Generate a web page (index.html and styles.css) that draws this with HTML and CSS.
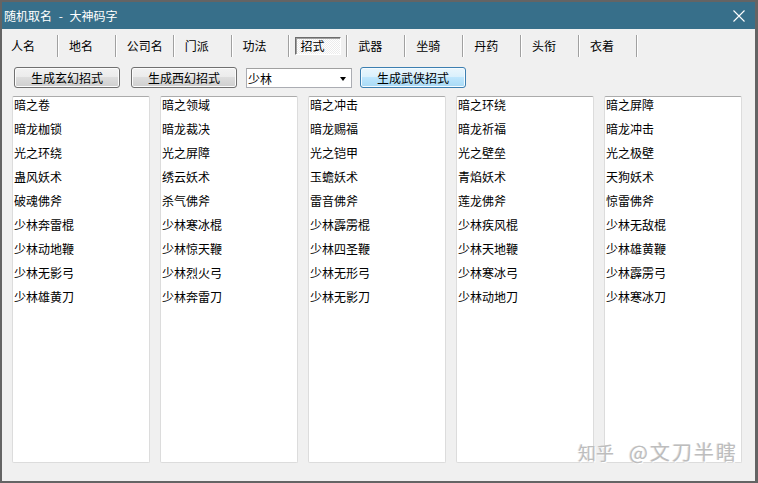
FILE: index.html
```html
<!DOCTYPE html>
<html lang="zh">
<head>
<meta charset="utf-8">
<title>随机取名 - 大神码字</title>
<link rel="stylesheet" href="styles.css">
</head>
<body>
<div class="window">
  <div class="titlebar">
    <span class="title">随机取名 - 大神码字</span>
    <svg class="close" width="12" height="12" viewBox="0 0 12 12"><path d="M0.5 0.5 L11.5 11.5 M11.5 0.5 L0.5 11.5" stroke="#fff" stroke-width="1.1" fill="none"/></svg>
  </div>
  <div class="tabs">
    <div class="tab">人名</div><div class="sep"></div>
    <div class="tab">地名</div><div class="sep"></div>
    <div class="tab">公司名</div><div class="sep"></div>
    <div class="tab">门派</div><div class="sep"></div>
    <div class="tab">功法</div><div class="sep"></div>
    <div class="tab selected">招式</div><div class="sep"></div>
    <div class="tab">武器</div><div class="sep"></div>
    <div class="tab">坐骑</div><div class="sep"></div>
    <div class="tab">丹药</div><div class="sep"></div>
    <div class="tab">头衔</div><div class="sep"></div>
    <div class="tab">衣着</div><div class="sep"></div>
  </div>
  <div class="toolbar">
    <button class="btn">生成玄幻招式</button>
    <button class="btn">生成西幻招式</button>
    <div class="combo"><span>少林</span><span class="arrow"></span></div>
    <button class="btn primary">生成武侠招式</button>
  </div>
  <div class="lists">
    <ul class="list">
      <li>暗之卷</li><li>暗龙枷锁</li><li>光之环绕</li><li>蛊风妖术</li><li>破魂佛斧</li><li>少林奔雷棍</li><li>少林动地鞭</li><li>少林无影弓</li><li>少林雄黄刀</li>
    </ul>
    <ul class="list">
      <li>暗之领域</li><li>暗龙裁决</li><li>光之屏障</li><li>绣云妖术</li><li>杀气佛斧</li><li>少林寒冰棍</li><li>少林惊天鞭</li><li>少林烈火弓</li><li>少林奔雷刀</li>
    </ul>
    <ul class="list">
      <li>暗之冲击</li><li>暗龙赐福</li><li>光之铠甲</li><li>玉蟾妖术</li><li>雷音佛斧</li><li>少林霹雳棍</li><li>少林四圣鞭</li><li>少林无形弓</li><li>少林无影刀</li>
    </ul>
    <ul class="list">
      <li>暗之环绕</li><li>暗龙祈福</li><li>光之壁垒</li><li>青焰妖术</li><li>莲龙佛斧</li><li>少林疾风棍</li><li>少林天地鞭</li><li>少林寒冰弓</li><li>少林动地刀</li>
    </ul>
    <ul class="list">
      <li>暗之屏障</li><li>暗龙冲击</li><li>光之极壁</li><li>天狗妖术</li><li>惊雷佛斧</li><li>少林无敌棍</li><li>少林雄黄鞭</li><li>少林霹雳弓</li><li>少林寒冰刀</li>
    </ul>
  </div>
  <div class="watermark"><span class="wm-site">知乎</span><span class="wm-user">@文刀半瞎</span></div>
</div>
</body>
</html>
```

FILE: styles.css
```css
* { box-sizing: border-box; }
html, body { margin: 0; padding: 0; }
body {
  width: 758px;
  height: 483px;
  overflow: hidden;
  font-family: "Noto Sans CJK SC", "Liberation Sans", sans-serif;
  font-size: 12px;
  color: #000;
}
.window {
  position: relative;
  width: 758px;
  height: 483px;
  background: #f0f0f0;
  border: 2px solid #646464;
  border-right-width: 3px;
  display: flex;
  flex-direction: column;
}
.titlebar {
  height: 27px;
  background: #376f8a;
  color: #fff;
  display: flex;
  align-items: center;
  justify-content: space-between;
  padding: 0 10px 0 2px;
  flex: none;
}
.title { font-size: 12px; word-spacing: 4px; }
.close { display: block; }
.tabs {
  display: flex;
  align-items: center;
  height: 22px;
  margin-top: 6px;
  padding-left: 4px;
  flex: none;
}
.tab {
  width: 45.9px;
  height: 18px;
  line-height: 16px;
  padding-left: 4px;
  margin-right: 5px;
  border: 1px solid transparent;
  white-space: nowrap;
  flex: none;
}
.tab.selected {
  border-color: #6d6d6d #fff #fff #6d6d6d;
  background-color: #f7f7f7;
  background-image: repeating-conic-gradient(#ffffff 0 25%, #ececec 0 50%);
  background-size: 2px 2px;
  box-shadow: inset 1px 1px 0 #a0a0a0;
}
.sep {
  width: 2px;
  height: 22px;
  border-left: 1px solid #a0a0a0;
  border-right: 1px solid #ffffff;
  margin-right: 5px;
  flex: none;
}
.toolbar {
  display: flex;
  align-items: center;
  height: 21px;
  margin-top: 10px;
  padding-left: 12px;
  flex: none;
}
.btn {
  width: 106px;
  height: 21px;
  padding: 0;
  font: inherit;
  color: #000;
  border: 1px solid #707070;
  border-radius: 3px;
  background: linear-gradient(#f2f2f2 0%, #ebebeb 50%, #dddddd 50%, #cfcfcf 100%);
  box-shadow: inset 0 0 0 1px #fcfcfc;
  margin-right: 11px;
}
.btn.primary {
  border-color: #3c7fb1;
  background: linear-gradient(#eaf6fd 0%, #d9f0fc 50%, #bee6fd 50%, #a7d9f5 100%);
  box-shadow: inset 0 0 0 1px #f4fbff;
  margin-right: 0;
}
.combo {
  width: 106px;
  height: 20px;
  margin: 1px 8px 0 -2px;
  background: #fff;
  border: 1px solid #abadb3;
  border-top-color: #a0a0a0;
  display: flex;
  align-items: center;
  justify-content: space-between;
  padding: 0 5px 0 1px;
}
.arrow {
  width: 0;
  height: 0;
  border-left: 3.5px solid transparent;
  border-right: 3.5px solid transparent;
  border-top: 4px solid #000;
  margin-top: 2px;
}
.lists {
  display: flex;
  gap: 10px;
  margin-top: 8px;
  padding-left: 10px;
  height: 367px;
  flex: none;
}
.list {
  list-style: none;
  margin: 0;
  padding: 0 0 0 1px;
  width: 138px;
  height: 367px;
  background: #fff;
  border: 1px solid #dcdcdc;
  border-top-color: #ababab;
  border-radius: 2px;
}
.list li {
  height: 24px;
  line-height: 16px;
  white-space: nowrap;
}
.watermark {
  position: absolute;
  left: 576px;
  top: 437px;
  line-height: 26px;
  color: #bdbdbd;
  text-shadow: 1px 1px 0 #ffffff, -1px 0 0 #e6e6e6;
  white-space: nowrap;
  display: flex;
  align-items: center;
}
.wm-site { font-size: 18px; margin-right: 15px; }
.wm-user { font-size: 20px; letter-spacing: 2px; }
```
